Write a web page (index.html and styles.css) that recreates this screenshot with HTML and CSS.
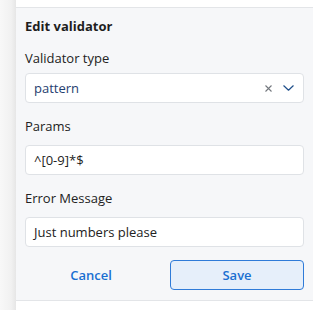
FILE: index.html
```html
<!DOCTYPE html>
<html lang="en">
<head>
    <meta charset="UTF-8">
    <title>Edit validator</title>
    <link rel="stylesheet" href="styles.css">
</head>
<body>
    <div class="page">
        <div class="rail"></div>
        <div class="main">
            <div class="top-bar"></div>
            <div class="panel">
                <h2>Edit validator</h2>

                <!-- Validator type -->
                <div class="field field-select">
                    <label>Validator type</label>
                    <div class="select">
                        <span class="select-value">pattern</span>
                        <span class="select-icons">
                            <svg width="7" height="7" viewBox="0 0 7 7"><path d="M0.5 0.5l6 6M6.5 0.5l-6 6" stroke="#74787e" stroke-width="1.1" fill="none"/></svg>
                            <svg width="11" height="6" viewBox="0 0 11 6"><path d="M0.8 0.8l4.7 4.4 4.7-4.4" stroke="#1f4f8a" stroke-width="1.2" fill="none" stroke-linecap="round" stroke-linejoin="round"/></svg>
                        </span>
                    </div>
                </div>

                <div class="field">
                    <label>Params</label>
                    <div class="input">^[0-9]*$</div>
                </div>

                <div class="field">
                    <label>Error Message</label>
                    <div class="input">Just numbers please</div>
                </div>

                <div class="actions">
                    <button class="btn btn-link">Cancel</button>
                    <button class="btn btn-save">Save</button>
                </div>
            </div>
            <div class="bottom-bar"></div>
        </div>
    </div>
</body>
</html>
```

FILE: styles.css
```css
body {
    margin: 0;
    font-family: "Open Sans", "Noto Sans", sans-serif;
    background-color: #fff;
}

.page {
    display: flex;
    height: 310px;
}

.rail {
    width: 16px;
    flex-shrink: 0;
    background: linear-gradient(to right, #f8f8f8 0%, #f1f1f1 70%, #e6e6e6 100%);
}

.main {
    flex: 1;
    display: flex;
    flex-direction: column;
}

.top-bar {
    height: 7px;
    background-color: #fff;
    border-bottom: 1px solid #e3e5e8;
}

.panel {
    background-color: #f6f7f9;
    padding: 8px 9px 10px 9px;
    border-bottom: 1px solid #e3e5e8;
}

.bottom-bar {
    flex: 1;
    background-color: #fff;
}

h2 {
    margin: 0 0 12px 0;
    font-size: 13px;
    font-weight: 700;
    color: #1e1e1e;
    line-height: 20px;
}

.field {
    margin-bottom: 13px;
}

.field label {
    display: block;
    font-size: 13px;
    color: #222;
    line-height: 20px;
    margin-bottom: 9px;
}

.field-select label {
    margin-bottom: 5px;
}

.select,
.input {
    height: 30px;
    box-sizing: border-box;
    background-color: #fff;
    border: 1px solid #dfe2e6;
    border-radius: 4px;
    padding: 0 8px;
    display: flex;
    align-items: center;
    font-size: 13px;
    color: #222;
}

.select-value {
    flex: 1;
    color: #1f4070;
}

.select-icons {
    display: flex;
    align-items: center;
    gap: 11px;
    padding-right: 1px;
}

.actions {
    display: flex;
    gap: 13px;
    margin-top: 1px;
}

.btn {
    flex: 1;
    height: 30px;
    font-family: inherit;
    font-size: 13px;
    font-weight: 600;
    color: #1a6fd1;
    border-radius: 4px;
    cursor: pointer;
}

.btn-link {
    background: none;
    border: none;
}

.btn-save {
    background-color: #e6effa;
    border: 1px solid #2f7bd8;
}
```
